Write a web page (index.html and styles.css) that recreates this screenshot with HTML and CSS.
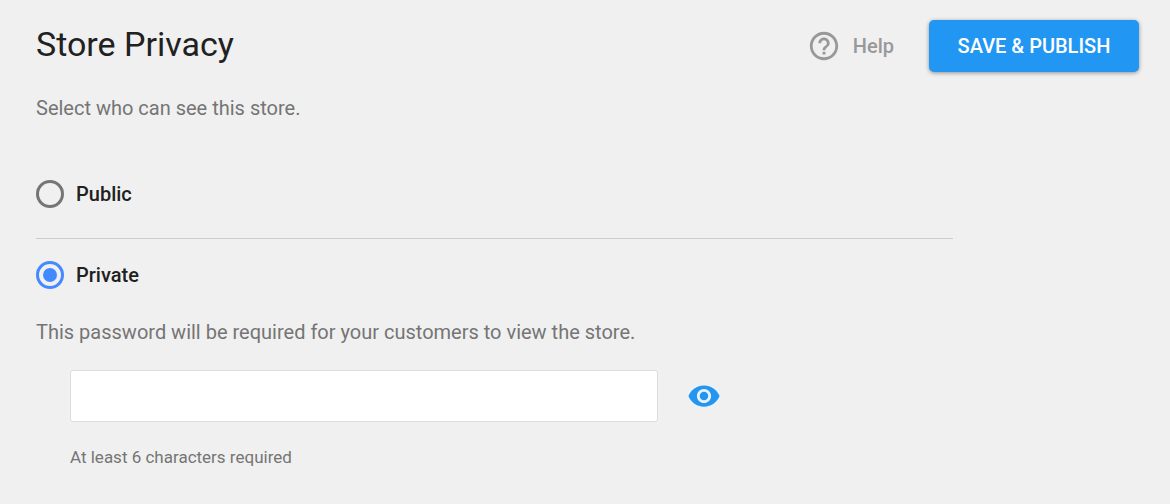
FILE: index.html
```html
<!DOCTYPE html>
<html lang="en">
<head>
<meta charset="utf-8">
<title>Store Privacy</title>
<link rel="stylesheet" href="styles.css">
</head>
<body>
<header class="header">
  <h1 class="title">Store Privacy</h1>
  <div class="actions">
    <a class="help" href="#">
      <svg class="help-icon" viewBox="0 0 24 24" aria-hidden="true"><path d="M11 18h2v-2h-2v2zm1-16C6.48 2 2 6.48 2 12s4.480 10 10 10 10-4.480 10-10S17.520 2 12 2zm0 18c-4.410 0-8-3.590-8-8s3.590-8 8-8 8 3.590 8 8-3.590 8-8 8zm0-14c-2.210 0-4 1.790-4 4h2c0-1.100.9-2 2-2s2 .9 2 2c0 2-3 1.750-3 5h2c0-2.250 3-2.500 3-5 0-2.210-1.790-4-4-4z"/></svg>
      Help
    </a>
    <button class="save" type="submit" form="privacy">SAVE &amp; PUBLISH</button>
  </div>
</header>
<main>
  <p class="intro">Select who can see this store.</p>
  <form class="form" id="privacy">
    <label class="option"><input class="radio" type="radio" name="privacy" value="public">Public</label>
    <hr class="divider">
    <label class="option"><input class="radio" type="radio" name="privacy" value="private" checked>Private</label>
    <label class="note" for="password">This password will be required for your customers to view the store.</label>
    <div class="password">
      <input class="field" id="password" type="password" aria-describedby="hint">
      <button class="reveal" type="button" aria-label="Show password">
        <svg class="eye" viewBox="0 0 24 24" aria-hidden="true"><path d="M12 4.500C7 4.500 2.730 7.610 1 12c1.730 4.390 6 7.500 11 7.500s9.270-3.110 11-7.500c-1.730-4.390-6-7.500-11-7.500zM12 17c-2.760 0-5-2.240-5-5s2.240-5 5-5 5 2.240 5 5-2.240 5-5 5zm0-8c-1.660 0-3 1.340-3 3s1.340 3 3 3 3-1.340 3-3-1.340-3-3-3z"/></svg>
      </button>
    </div>
    <p class="hint" id="hint">At least 6 characters required</p>
  </form>
</main>
</body>
</html>
```
FILE: styles.css
```css
* { box-sizing: border-box; }
body {
  margin: 0;
  padding: 20px 31px 32px 36px;
  background: #f0f0f0;
  color: #212121;
  font: 20px/24px Roboto, sans-serif;
}
h1, p { margin: 0; }
.header { display: flex; justify-content: space-between; align-items: flex-start; }
.title { font-size: 34px; line-height: 48px; font-weight: 400; }
.actions { display: flex; align-items: center; gap: 35px; }
.help {
  display: flex;
  align-items: center;
  gap: 12px;
  color: #999;
  font-weight: 500;
  text-decoration: none;
}
.help-icon { width: 34px; height: 34px; fill: currentColor; }
.save {
  width: 210px;
  height: 52px;
  padding: 0;
  border: 0;
  border-radius: 5px;
  background: #2196f3;
  box-shadow: 0 1px 4px rgba(0, 0, 0, .4);
  color: #fff;
  font: 500 20px/24px Roboto, sans-serif;
}
.intro { margin-top: 24px; color: #757575; }
.form { max-width: 917px; margin-top: 60px; }
.option {
  display: flex;
  align-items: flex-start;
  gap: 12px;
  height: 30px;
  line-height: 28px;
  font-weight: 500;
}
.radio {
  display: grid;
  place-items: center;
  appearance: none;
  width: 28px;
  height: 28px;
  margin: 0;
  border: 3px solid #757575;
  border-radius: 50%;
}
.radio:checked { border-color: #448aff; }
.radio:checked::before {
  content: "";
  width: 14px;
  height: 14px;
  border-radius: 50%;
  background: #448aff;
}
.divider { height: 1px; margin: 28px 0 22px; border: 0; background: #ccc; }
.note { display: block; margin-top: 29px; color: #757575; }
.password { display: flex; align-items: center; gap: 29px; margin: 26px 0 0 34px; }
.field {
  flex: 0 1 588px;
  min-width: 0;
  height: 52px;
  padding: 0 16px;
  border: 1px solid #ddd;
  border-radius: 3px;
  background: #fff;
  font: inherit;
}
.reveal { display: flex; padding: 0; border: 0; background: none; color: #2196f3; }
.eye { width: 34px; height: 34px; fill: currentColor; }
.hint { margin: 23px 0 0 34px; color: #757575; font-size: 17px; }
```
